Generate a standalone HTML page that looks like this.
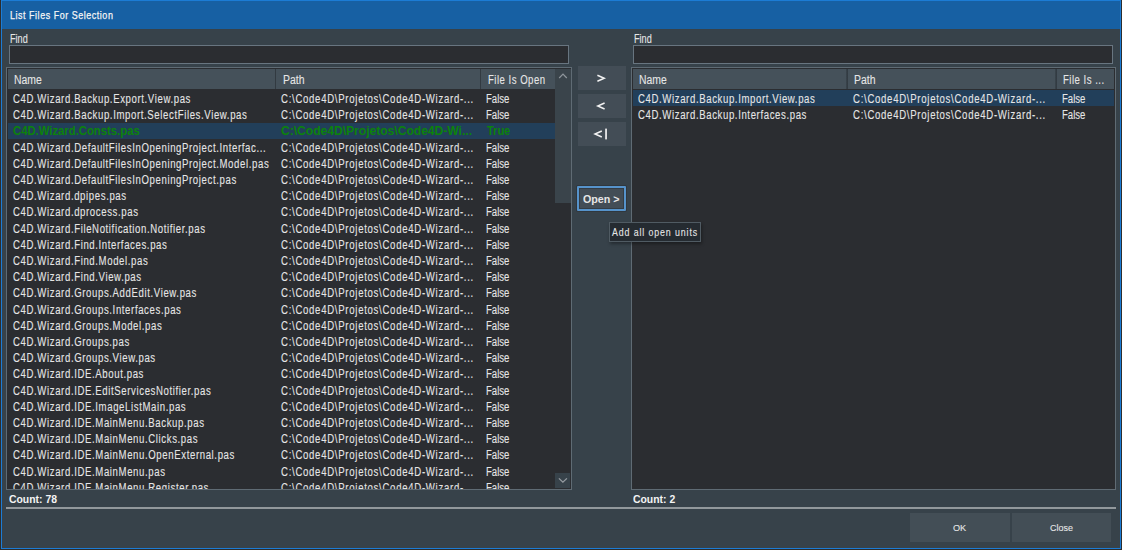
<!DOCTYPE html>
<html><head><meta charset="utf-8"><style>
*{margin:0;padding:0;box-sizing:border-box}
html,body{width:1122px;height:550px;overflow:hidden;background:#2d2d2d}
body{position:relative;font-family:"Liberation Sans",sans-serif;color:#e6e6e6}
.a{position:absolute}
.t{position:absolute;line-height:1;white-space:pre;transform-origin:0 0;color:#e6e6e6;-webkit-text-stroke:0.1px currentColor}
.frame{position:absolute;left:1px;top:0;width:1120px;height:549px;border:1px solid #1c7cd5}
.title{position:absolute;left:2px;top:1px;width:1118px;height:28px;background:#1760a3}
.body{position:absolute;left:2px;top:29px;width:1118px;height:519px;background:#37424a}
.edit{position:absolute;background:#2b2d31;border:1px solid #687580}
.grid{position:absolute;background:#2b2d31;border:1px solid #5f6b74;overflow:hidden}
.hdr{position:absolute;top:69px;height:20px;background:#45515a}
.hsep{position:absolute;top:69px;height:20px;width:1px;background:#323a41}
.clip{position:absolute;overflow:hidden}
.btn{position:absolute;background:#434d56}
</style></head><body>
<div class="frame"></div>
<div class="title"></div>
<div class="body"></div>
<div class="t" style="left:9.7px;top:9.92px;font-size:11.2px;transform:scaleX(0.8000);letter-spacing:0.670px;color:#f6f6f6;-webkit-text-stroke:0.25px #f6f6f6;">List Files For Selection</div>

<div class="t" style="left:9.6px;top:32.74px;font-size:12px;transform:scaleX(0.7582);letter-spacing:0.000px;">Find</div>
<div class="edit" style="left:9px;top:45px;width:560px;height:19px"></div>

<div class="grid" style="left:6px;top:67px;width:566px;height:423px"></div>
<div class="hdr" style="left:8px;width:547px"></div>
<div class="hsep" style="left:275px"></div>
<div class="hsep" style="left:480px"></div>
<div class="t" style="left:14.2px;top:74.14px;font-size:12px;transform:scaleX(0.8683);letter-spacing:0.000px;">Name</div>
<div class="t" style="left:283px;top:74.14px;font-size:12px;transform:scaleX(0.8683);letter-spacing:0.000px;">Path</div>
<div class="t" style="left:487.8px;top:74.14px;font-size:12px;transform:scaleX(0.8000);letter-spacing:0.608px;">File Is Open</div>
<div class="a" style="left:555px;top:69px;width:16px;height:134px;background:#3a444b"></div>
<div class="a" style="left:555px;top:473px;width:15px;height:15px;background:#37424a"></div>
<div class="a" style="left:8px;top:122.6px;width:547px;height:16.2px;background:#223f5a"></div>
<div class="clip" style="left:8px;top:90px;width:547px;height:399px">
<div style="position:absolute;left:-8px;top:-90px;width:1122px;height:600px">
<div class="t" style="left:13.2px;top:92.94px;font-size:12px;transform:scaleX(0.8000);letter-spacing:0.767px;">C4D.Wizard.Backup.Export.View.pas</div><div class="t" style="left:281.2px;top:92.94px;font-size:12px;transform:scaleX(0.8000);letter-spacing:0.884px;">C:\Code4D\Projetos\Code4D-Wizard-...</div><div class="t" style="left:486.4px;top:92.94px;font-size:12px;transform:scaleX(0.7974);letter-spacing:0.000px;">False</div><div class="t" style="left:13.2px;top:109.14px;font-size:12px;transform:scaleX(0.8000);letter-spacing:0.767px;">C4D.Wizard.Backup.Import.SelectFiles.View.pas</div><div class="t" style="left:281.2px;top:109.14px;font-size:12px;transform:scaleX(0.8000);letter-spacing:0.884px;">C:\Code4D\Projetos\Code4D-Wizard-...</div><div class="t" style="left:486.4px;top:109.14px;font-size:12px;transform:scaleX(0.7974);letter-spacing:0.000px;">False</div><div class="t" style="left:13.2px;top:125.34px;font-size:12px;transform:scaleX(0.9414);letter-spacing:0.000px;font-weight:bold;-webkit-text-stroke:0;color:#0c820c;">C4D.Wizard.Consts.pas</div><div class="t" style="left:281.2px;top:125.34px;font-size:12px;transform:scaleX(1.0057);letter-spacing:0.000px;font-weight:bold;-webkit-text-stroke:0;color:#0c820c;">C:\Code4D\Projetos\Code4D-Wi...</div><div class="t" style="left:487.2px;top:125.34px;font-size:12px;transform:scaleX(0.9154);letter-spacing:0.000px;font-weight:bold;-webkit-text-stroke:0;color:#0c820c;">True</div><div class="t" style="left:13.2px;top:141.54px;font-size:12px;transform:scaleX(0.8000);letter-spacing:0.767px;">C4D.Wizard.DefaultFilesInOpeningProject.Interfac...</div><div class="t" style="left:281.2px;top:141.54px;font-size:12px;transform:scaleX(0.8000);letter-spacing:0.884px;">C:\Code4D\Projetos\Code4D-Wizard-...</div><div class="t" style="left:486.4px;top:141.54px;font-size:12px;transform:scaleX(0.7974);letter-spacing:0.000px;">False</div><div class="t" style="left:13.2px;top:157.74px;font-size:12px;transform:scaleX(0.8000);letter-spacing:0.767px;">C4D.Wizard.DefaultFilesInOpeningProject.Model.pas</div><div class="t" style="left:281.2px;top:157.74px;font-size:12px;transform:scaleX(0.8000);letter-spacing:0.884px;">C:\Code4D\Projetos\Code4D-Wizard-...</div><div class="t" style="left:486.4px;top:157.74px;font-size:12px;transform:scaleX(0.7974);letter-spacing:0.000px;">False</div><div class="t" style="left:13.2px;top:173.94px;font-size:12px;transform:scaleX(0.8000);letter-spacing:0.767px;">C4D.Wizard.DefaultFilesInOpeningProject.pas</div><div class="t" style="left:281.2px;top:173.94px;font-size:12px;transform:scaleX(0.8000);letter-spacing:0.884px;">C:\Code4D\Projetos\Code4D-Wizard-...</div><div class="t" style="left:486.4px;top:173.94px;font-size:12px;transform:scaleX(0.7974);letter-spacing:0.000px;">False</div><div class="t" style="left:13.2px;top:190.14px;font-size:12px;transform:scaleX(0.8000);letter-spacing:0.767px;">C4D.Wizard.dpipes.pas</div><div class="t" style="left:281.2px;top:190.14px;font-size:12px;transform:scaleX(0.8000);letter-spacing:0.884px;">C:\Code4D\Projetos\Code4D-Wizard-...</div><div class="t" style="left:486.4px;top:190.14px;font-size:12px;transform:scaleX(0.7974);letter-spacing:0.000px;">False</div><div class="t" style="left:13.2px;top:206.34px;font-size:12px;transform:scaleX(0.8000);letter-spacing:0.767px;">C4D.Wizard.dprocess.pas</div><div class="t" style="left:281.2px;top:206.34px;font-size:12px;transform:scaleX(0.8000);letter-spacing:0.884px;">C:\Code4D\Projetos\Code4D-Wizard-...</div><div class="t" style="left:486.4px;top:206.34px;font-size:12px;transform:scaleX(0.7974);letter-spacing:0.000px;">False</div><div class="t" style="left:13.2px;top:222.54px;font-size:12px;transform:scaleX(0.8000);letter-spacing:0.767px;">C4D.Wizard.FileNotification.Notifier.pas</div><div class="t" style="left:281.2px;top:222.54px;font-size:12px;transform:scaleX(0.8000);letter-spacing:0.884px;">C:\Code4D\Projetos\Code4D-Wizard-...</div><div class="t" style="left:486.4px;top:222.54px;font-size:12px;transform:scaleX(0.7974);letter-spacing:0.000px;">False</div><div class="t" style="left:13.2px;top:238.74px;font-size:12px;transform:scaleX(0.8000);letter-spacing:0.767px;">C4D.Wizard.Find.Interfaces.pas</div><div class="t" style="left:281.2px;top:238.74px;font-size:12px;transform:scaleX(0.8000);letter-spacing:0.884px;">C:\Code4D\Projetos\Code4D-Wizard-...</div><div class="t" style="left:486.4px;top:238.74px;font-size:12px;transform:scaleX(0.7974);letter-spacing:0.000px;">False</div><div class="t" style="left:13.2px;top:254.94px;font-size:12px;transform:scaleX(0.8000);letter-spacing:0.767px;">C4D.Wizard.Find.Model.pas</div><div class="t" style="left:281.2px;top:254.94px;font-size:12px;transform:scaleX(0.8000);letter-spacing:0.884px;">C:\Code4D\Projetos\Code4D-Wizard-...</div><div class="t" style="left:486.4px;top:254.94px;font-size:12px;transform:scaleX(0.7974);letter-spacing:0.000px;">False</div><div class="t" style="left:13.2px;top:271.14px;font-size:12px;transform:scaleX(0.8000);letter-spacing:0.767px;">C4D.Wizard.Find.View.pas</div><div class="t" style="left:281.2px;top:271.14px;font-size:12px;transform:scaleX(0.8000);letter-spacing:0.884px;">C:\Code4D\Projetos\Code4D-Wizard-...</div><div class="t" style="left:486.4px;top:271.14px;font-size:12px;transform:scaleX(0.7974);letter-spacing:0.000px;">False</div><div class="t" style="left:13.2px;top:287.34px;font-size:12px;transform:scaleX(0.8000);letter-spacing:0.767px;">C4D.Wizard.Groups.AddEdit.View.pas</div><div class="t" style="left:281.2px;top:287.34px;font-size:12px;transform:scaleX(0.8000);letter-spacing:0.884px;">C:\Code4D\Projetos\Code4D-Wizard-...</div><div class="t" style="left:486.4px;top:287.34px;font-size:12px;transform:scaleX(0.7974);letter-spacing:0.000px;">False</div><div class="t" style="left:13.2px;top:303.54px;font-size:12px;transform:scaleX(0.8000);letter-spacing:0.767px;">C4D.Wizard.Groups.Interfaces.pas</div><div class="t" style="left:281.2px;top:303.54px;font-size:12px;transform:scaleX(0.8000);letter-spacing:0.884px;">C:\Code4D\Projetos\Code4D-Wizard-...</div><div class="t" style="left:486.4px;top:303.54px;font-size:12px;transform:scaleX(0.7974);letter-spacing:0.000px;">False</div><div class="t" style="left:13.2px;top:319.74px;font-size:12px;transform:scaleX(0.8000);letter-spacing:0.767px;">C4D.Wizard.Groups.Model.pas</div><div class="t" style="left:281.2px;top:319.74px;font-size:12px;transform:scaleX(0.8000);letter-spacing:0.884px;">C:\Code4D\Projetos\Code4D-Wizard-...</div><div class="t" style="left:486.4px;top:319.74px;font-size:12px;transform:scaleX(0.7974);letter-spacing:0.000px;">False</div><div class="t" style="left:13.2px;top:335.94px;font-size:12px;transform:scaleX(0.8000);letter-spacing:0.767px;">C4D.Wizard.Groups.pas</div><div class="t" style="left:281.2px;top:335.94px;font-size:12px;transform:scaleX(0.8000);letter-spacing:0.884px;">C:\Code4D\Projetos\Code4D-Wizard-...</div><div class="t" style="left:486.4px;top:335.94px;font-size:12px;transform:scaleX(0.7974);letter-spacing:0.000px;">False</div><div class="t" style="left:13.2px;top:352.14px;font-size:12px;transform:scaleX(0.8000);letter-spacing:0.767px;">C4D.Wizard.Groups.View.pas</div><div class="t" style="left:281.2px;top:352.14px;font-size:12px;transform:scaleX(0.8000);letter-spacing:0.884px;">C:\Code4D\Projetos\Code4D-Wizard-...</div><div class="t" style="left:486.4px;top:352.14px;font-size:12px;transform:scaleX(0.7974);letter-spacing:0.000px;">False</div><div class="t" style="left:13.2px;top:368.34px;font-size:12px;transform:scaleX(0.8000);letter-spacing:0.767px;">C4D.Wizard.IDE.About.pas</div><div class="t" style="left:281.2px;top:368.34px;font-size:12px;transform:scaleX(0.8000);letter-spacing:0.884px;">C:\Code4D\Projetos\Code4D-Wizard-...</div><div class="t" style="left:486.4px;top:368.34px;font-size:12px;transform:scaleX(0.7974);letter-spacing:0.000px;">False</div><div class="t" style="left:13.2px;top:384.54px;font-size:12px;transform:scaleX(0.8000);letter-spacing:0.767px;">C4D.Wizard.IDE.EditServicesNotifier.pas</div><div class="t" style="left:281.2px;top:384.54px;font-size:12px;transform:scaleX(0.8000);letter-spacing:0.884px;">C:\Code4D\Projetos\Code4D-Wizard-...</div><div class="t" style="left:486.4px;top:384.54px;font-size:12px;transform:scaleX(0.7974);letter-spacing:0.000px;">False</div><div class="t" style="left:13.2px;top:400.74px;font-size:12px;transform:scaleX(0.8000);letter-spacing:0.767px;">C4D.Wizard.IDE.ImageListMain.pas</div><div class="t" style="left:281.2px;top:400.74px;font-size:12px;transform:scaleX(0.8000);letter-spacing:0.884px;">C:\Code4D\Projetos\Code4D-Wizard-...</div><div class="t" style="left:486.4px;top:400.74px;font-size:12px;transform:scaleX(0.7974);letter-spacing:0.000px;">False</div><div class="t" style="left:13.2px;top:416.94px;font-size:12px;transform:scaleX(0.8000);letter-spacing:0.767px;">C4D.Wizard.IDE.MainMenu.Backup.pas</div><div class="t" style="left:281.2px;top:416.94px;font-size:12px;transform:scaleX(0.8000);letter-spacing:0.884px;">C:\Code4D\Projetos\Code4D-Wizard-...</div><div class="t" style="left:486.4px;top:416.94px;font-size:12px;transform:scaleX(0.7974);letter-spacing:0.000px;">False</div><div class="t" style="left:13.2px;top:433.14px;font-size:12px;transform:scaleX(0.8000);letter-spacing:0.767px;">C4D.Wizard.IDE.MainMenu.Clicks.pas</div><div class="t" style="left:281.2px;top:433.14px;font-size:12px;transform:scaleX(0.8000);letter-spacing:0.884px;">C:\Code4D\Projetos\Code4D-Wizard-...</div><div class="t" style="left:486.4px;top:433.14px;font-size:12px;transform:scaleX(0.7974);letter-spacing:0.000px;">False</div><div class="t" style="left:13.2px;top:449.34px;font-size:12px;transform:scaleX(0.8000);letter-spacing:0.767px;">C4D.Wizard.IDE.MainMenu.OpenExternal.pas</div><div class="t" style="left:281.2px;top:449.34px;font-size:12px;transform:scaleX(0.8000);letter-spacing:0.884px;">C:\Code4D\Projetos\Code4D-Wizard-...</div><div class="t" style="left:486.4px;top:449.34px;font-size:12px;transform:scaleX(0.7974);letter-spacing:0.000px;">False</div><div class="t" style="left:13.2px;top:465.54px;font-size:12px;transform:scaleX(0.8000);letter-spacing:0.767px;">C4D.Wizard.IDE.MainMenu.pas</div><div class="t" style="left:281.2px;top:465.54px;font-size:12px;transform:scaleX(0.8000);letter-spacing:0.884px;">C:\Code4D\Projetos\Code4D-Wizard-...</div><div class="t" style="left:486.4px;top:465.54px;font-size:12px;transform:scaleX(0.7974);letter-spacing:0.000px;">False</div><div class="t" style="left:13.2px;top:481.74px;font-size:12px;transform:scaleX(0.8000);letter-spacing:0.767px;">C4D.Wizard.IDE.MainMenu.Register.pas</div><div class="t" style="left:281.2px;top:481.74px;font-size:12px;transform:scaleX(0.8000);letter-spacing:0.884px;">C:\Code4D\Projetos\Code4D-Wizard-...</div><div class="t" style="left:486.4px;top:481.74px;font-size:12px;transform:scaleX(0.7974);letter-spacing:0.000px;">False</div>
</div></div>

<div class="btn" style="left:577.5px;top:66px;width:48px;height:24px"></div>
<div class="btn" style="left:577.5px;top:94px;width:48px;height:24px"></div>
<div class="btn" style="left:577.5px;top:122px;width:48px;height:24px"></div>
<div class="btn" style="left:577px;top:186px;width:49px;height:25px;border:2px solid #5693cb;border-radius:1px;box-shadow:inset 0 0 0 1px #343d45,0 0 0 1px #30373d"></div>
<div class="t" style="left:582.6px;top:194.19px;font-size:11px;transform:scaleX(0.9736);letter-spacing:0.000px;font-weight:bold;-webkit-text-stroke:0;">Open &gt;</div>
<svg class="a" style="left:0;top:0" width="1122" height="550" viewBox="0 0 1122 550">
<g fill="none" stroke="#f2f2f2" stroke-width="1.5" stroke-linecap="butt" stroke-linejoin="miter">
<polyline points="597.4,75.3 604.2,78.3 597.4,81.3"/>
<polyline points="604.6,103 597.8,106 604.6,109"/>
<polyline points="601.8,131 595,134 601.8,137"/>
</g>
<rect x="605.2" y="128.6" width="1.7" height="10.8" fill="#f2f2f2"/>
<polyline points="559.2,78 563,74.2 566.8,78" fill="none" stroke="#8f969c" stroke-width="1.2"/>
<polyline points="558.9,478.4 562.9,482.2 566.9,478.4" fill="none" stroke="#979da3" stroke-width="1.3"/>
</svg>

<div class="t" style="left:633.6px;top:32.74px;font-size:12px;transform:scaleX(0.7582);letter-spacing:0.000px;">Find</div>
<div class="edit" style="left:633px;top:45px;width:480px;height:19px"></div>
<div class="grid" style="left:631px;top:67px;width:485px;height:423px"></div>
<div class="hdr" style="left:633px;width:481px"></div>
<div class="hsep" style="left:846px;width:2px;background:linear-gradient(90deg,#3a454d,#30383f)"></div>
<div class="hsep" style="left:1055px;width:2px;background:linear-gradient(90deg,#3a454d,#30383f)"></div>
<div class="t" style="left:639.2px;top:74.14px;font-size:12px;transform:scaleX(0.8683);letter-spacing:0.000px;">Name</div>
<div class="t" style="left:854px;top:74.14px;font-size:12px;transform:scaleX(0.8683);letter-spacing:0.000px;">Path</div>
<div class="t" style="left:1063.2px;top:74.14px;font-size:12px;transform:scaleX(0.8000);letter-spacing:0.608px;">File Is ...</div>
<div class="a" style="left:633px;top:90.2px;width:481px;height:16.2px;background:#223f5a"></div>
<div class="clip" style="left:633px;top:90px;width:481px;height:399px">
<div style="position:absolute;left:-633px;top:-90px;width:1122px;height:600px">
<div class="t" style="left:638.2px;top:92.94px;font-size:12px;transform:scaleX(0.8000);letter-spacing:0.767px;">C4D.Wizard.Backup.Import.View.pas</div><div class="t" style="left:853.2px;top:92.94px;font-size:12px;transform:scaleX(0.8000);letter-spacing:0.884px;">C:\Code4D\Projetos\Code4D-Wizard-...</div><div class="t" style="left:1062.4px;top:92.94px;font-size:12px;transform:scaleX(0.7974);letter-spacing:0.000px;">False</div><div class="t" style="left:638.2px;top:109.14px;font-size:12px;transform:scaleX(0.8000);letter-spacing:0.767px;">C4D.Wizard.Backup.Interfaces.pas</div><div class="t" style="left:853.2px;top:109.14px;font-size:12px;transform:scaleX(0.8000);letter-spacing:0.884px;">C:\Code4D\Projetos\Code4D-Wizard-...</div><div class="t" style="left:1062.4px;top:109.14px;font-size:12px;transform:scaleX(0.7974);letter-spacing:0.000px;">False</div>
</div></div>

<div class="t" style="left:8.8px;top:494.19px;font-size:11px;transform:scaleX(0.9461);letter-spacing:0.000px;font-weight:bold;-webkit-text-stroke:0;color:#f4f4f4;">Count: 78</div>
<div class="t" style="left:632.8px;top:494.19px;font-size:11px;transform:scaleX(0.9461);letter-spacing:0.000px;font-weight:bold;-webkit-text-stroke:0;color:#f4f4f4;">Count: 2</div>
<div class="a" style="left:6px;top:507px;width:1110px;height:2px;background:#92989c"></div>
<div class="btn" style="left:910px;top:513px;width:100px;height:29px;background:#434e56"></div>
<div class="btn" style="left:1012px;top:513px;width:99px;height:29px;background:#434e56"></div>
<div class="t" style="left:953.2px;top:523.20px;font-size:9.8px;transform:scaleX(0.9325);letter-spacing:0.000px;">OK</div>
<div class="t" style="left:1049.7px;top:523.20px;font-size:9.8px;transform:scaleX(0.9137);letter-spacing:0.000px;">Close</div>

<div class="a" style="left:609px;top:222px;width:92px;height:20px;background:#252b31;border:1px solid #505b63;box-shadow:1px 2px 3px rgba(0,0,0,.35)"></div>
<div class="t" style="left:612px;top:226.69px;font-size:11px;transform:scaleX(0.8000);letter-spacing:1.114px;">Add all open units</div>
</body></html>
